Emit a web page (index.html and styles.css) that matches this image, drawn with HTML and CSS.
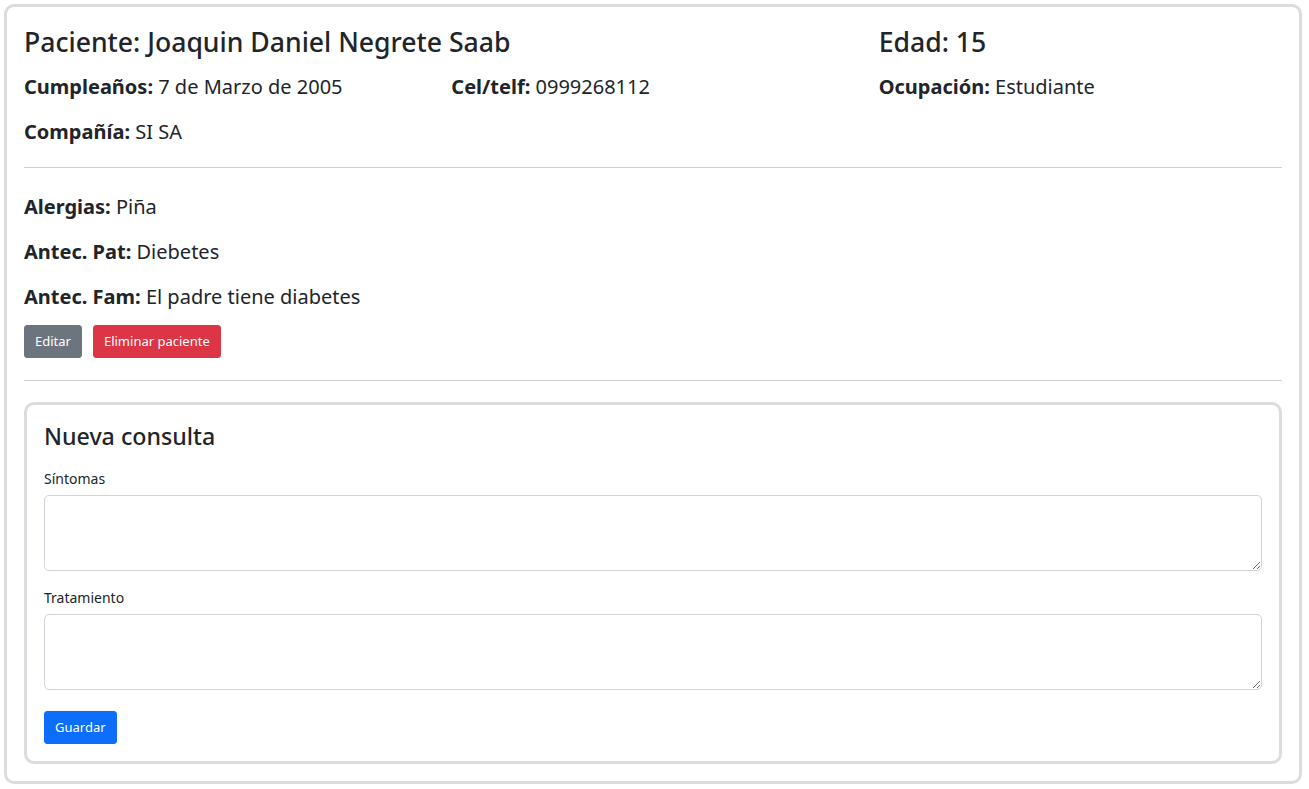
FILE: index.html
```html
<!DOCTYPE html>
<html lang="es">
<head>
<meta charset="utf-8">
<title>Paciente</title>
<link rel="stylesheet" href="styles.css">
</head>
<body>
<div class="sheet">
  <div class="grid head-row">
    <h4 class="title span2">Paciente: Joaquin Daniel Negrete Saab</h4>
    <h4 class="title">Edad: 15</h4>
  </div>
  <div class="grid">
    <p class="info"><b>Cumpleaños:</b> 7 de Marzo de 2005</p>
    <p class="info"><b>Cel/telf:</b> 0999268112</p>
    <p class="info"><b>Ocupación:</b> Estudiante</p>
    <p class="info"><b>Compañía:</b> SI SA</p>
  </div>
  <hr class="rule">
  <p class="info"><b>Alergias:</b> Piña</p>
  <p class="info"><b>Antec. Pat:</b> Diebetes</p>
  <p class="info"><b>Antec. Fam:</b> El padre tiene diabetes</p>
  <div class="actions">
    <button class="btn btn-secondary">Editar</button>
    <button class="btn btn-danger">Eliminar paciente</button>
  </div>
  <hr class="rule rule2">
  <form class="card">
    <h4 class="card-title">Nueva consulta</h4>
    <label class="label" for="s">Síntomas</label>
    <textarea id="s" class="field"></textarea>
    <label class="label" for="t">Tratamiento</label>
    <textarea id="t" class="field"></textarea>
    <button type="button" class="btn btn-primary save">Guardar</button>
  </form>
</div>
</body>
</html>
```
FILE: styles.css
```css
* { box-sizing: border-box; }
html, body { margin: 0; padding: 0; background: #fff; }
body {
  font-family: "Noto Sans", "Open Sans", sans-serif;
  color: #212529;
  -webkit-font-smoothing: antialiased;
}
.sheet {
  margin: 4px 7px 4px 4px;
  border: 3px solid #dcdcdc;
  border-radius: 10px;
  padding: 17px;
}
.grid {
  display: grid;
  grid-template-columns: repeat(3, 1fr);
  margin: 0 -12px;
}
.grid > * { padding: 0 12px; }
.span2 { grid-column: span 2; }
.title {
  margin: 4px 0 15px;
  font-size: 26.6px;
  line-height: 29px;
  font-weight: 500;
}
.info {
  margin: 0 0 15px;
  font-size: 20px;
  line-height: 30px;
}
.info b { font-weight: 700; }
.rule {
  border: 0;
  border-top: 1px solid #cfd0d1;
  margin: 5px 0 24px;
}
.actions {
  display: flex;
  gap: 11px;
  margin-top: -2px;
}
.btn {
  font-family: inherit;
  font-size: 13px;
  line-height: 21px;
  padding: 5px 10px;
  border: 1px solid transparent;
  border-radius: 3px;
  color: #fff;
  cursor: pointer;
}
.btn-secondary { background: #6c757d; border-color: #6c757d; }
.btn-danger { background: #dc3545; border-color: #dc3545; }
.btn-primary { background: #0d6efd; border-color: #0d6efd; }
.rule2 { margin: 22px 0 21px; }
.card {
  display: flex;
  flex-direction: column;
  align-items: flex-start;
  border: 3px solid #dcdcdc;
  border-radius: 10px;
  padding: 17px;
}
.card-title {
  margin: 0 0 17px;
  font-size: 23.2px;
  line-height: 29px;
  font-weight: 500;
}
.label {
  font-size: 14px;
  line-height: 21px;
  margin-bottom: 6px;
}
.field {
  width: 100%;
  height: 76px;
  border: 1px solid #ced4da;
  border-radius: 5px;
  margin-bottom: 16px;
  font-family: inherit;
  resize: vertical;
}
.save { margin-top: 5px; }
```
